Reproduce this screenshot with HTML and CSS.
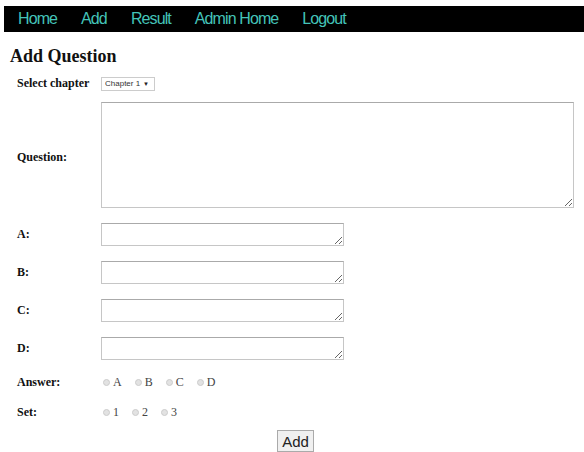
FILE: index.html
```html
<!DOCTYPE html>
<html lang="en">
<head>
<meta charset="utf-8">
<title>Add Question</title>
<link rel="stylesheet" href="styles.css">
</head>
<body>
<nav class="topnav">
  <a href="#">Home</a>
  <a href="#">Add</a>
  <a href="#">Result</a>
  <a href="#">Admin Home</a>
  <a href="#">Logout</a>
</nav>
<h1 class="title">Add Question</h1>
<form class="qform">
  <label class="lbl">Select chapter</label>
  <div class="field">
    <span class="select-wrap">
      <select class="chapter">
        <option>Chapter 1</option>
        <option>Chapter 2</option>
        <option>Chapter 3</option>
      </select>
    </span>
  </div>

  <label class="lbl">Question:</label>
  <div class="field"><textarea class="q-text"></textarea></div>

  <label class="lbl">A:</label>
  <div class="field"><textarea class="opt-text"></textarea></div>

  <label class="lbl">B:</label>
  <div class="field"><textarea class="opt-text"></textarea></div>

  <label class="lbl">C:</label>
  <div class="field"><textarea class="opt-text"></textarea></div>

  <label class="lbl">D:</label>
  <div class="field"><textarea class="opt-text"></textarea></div>

  <label class="lbl">Answer:</label>
  <div class="field radios">
    <label class="choice"><input type="radio" name="ans"> A</label>
    <label class="choice"><input type="radio" name="ans"> B</label>
    <label class="choice"><input type="radio" name="ans"> C</label>
    <label class="choice"><input type="radio" name="ans"> D</label>
  </div>

  <label class="lbl">Set:</label>
  <div class="field radios">
    <label class="choice"><input type="radio" name="set"> 1</label>
    <label class="choice"><input type="radio" name="set"> 2</label>
    <label class="choice"><input type="radio" name="set"> 3</label>
  </div>

  <div class="actions"><button type="button" class="add-btn">Add</button></div>
</form>
</body>
</html>
```
FILE: styles.css
```css
html, body {
  margin: 0;
  padding: 0;
  background: #fff;
}

body {
  font-family: "Liberation Serif", "Times New Roman", serif;
  color: #111;
}

.topnav {
  margin: 6px 0 0 4px;
  height: 26px;
  background: #000;
  display: flex;
  align-items: center;
  padding-left: 14px;
  gap: 24px;
}

.topnav a {
  font-family: "Liberation Sans", Arial, sans-serif;
  font-size: 16px;
  letter-spacing: -0.9px;
  color: #44c4b9;
  text-decoration: none;
}

.title {
  margin: 13px 0 0 10px;
  font-size: 18px;
  font-weight: bold;
  line-height: 22px;
}

.qform {
  display: grid;
  grid-template-columns: 84px 1fr;
  row-gap: 15px;
  padding: 9px 10px 0 17px;
  align-items: center;
}

.lbl {
  font-size: 12px;
  font-weight: bold;
  color: #111;
}

.field {
  display: flex;
  align-items: center;
}

.select-wrap {
  position: relative;
  display: inline-flex;
}

.chapter {
  appearance: none;
  -webkit-appearance: none;
  font-family: "Liberation Sans", Arial, sans-serif;
  font-size: 8px;
  color: #333;
  height: 14px;
  width: 54px;
  padding: 0 0 0 3px;
  border: 1px solid #ccc;
  background: #fff;
  border-radius: 0;
}

.select-wrap::after {
  content: "\25BC";
  position: absolute;
  right: 6px;
  top: 50%;
  transform: translateY(-50%);
  font-size: 6px;
  line-height: 6px;
  color: #222;
  pointer-events: none;
}

textarea {
  box-sizing: border-box;
  border: 1px solid #c6c6c6;
  border-top-color: #aaa;
  background: #fff;
  margin: 0;
  font-family: inherit;
}

.q-text {
  width: 473px;
  height: 106px;
  margin-top: -4px;
}

.opt-text {
  width: 243px;
  height: 23px;
}

.radios {
  gap: 11px;
  font-size: 12px;
  color: #444;
}

.choice {
  display: inline-flex;
  align-items: center;
  gap: 3px;
}

.choice input {
  appearance: none;
  -webkit-appearance: none;
  width: 7px;
  height: 7px;
  margin: 0 0 0 2px;
  border-radius: 50%;
  border: 1px solid #ccc;
  background: #e2e2e2;
}

.actions {
  grid-column: 1 / -1;
  display: flex;
  justify-content: center;
  margin-top: -5px;
}

.add-btn {
  font-family: "Liberation Sans", Arial, sans-serif;
  font-size: 15px;
  color: #222;
  padding: 1px 4px;
  height: 22px;
  border: 1px solid #aaa;
  background: #f0f0f0;
  border-radius: 0;
}
```
